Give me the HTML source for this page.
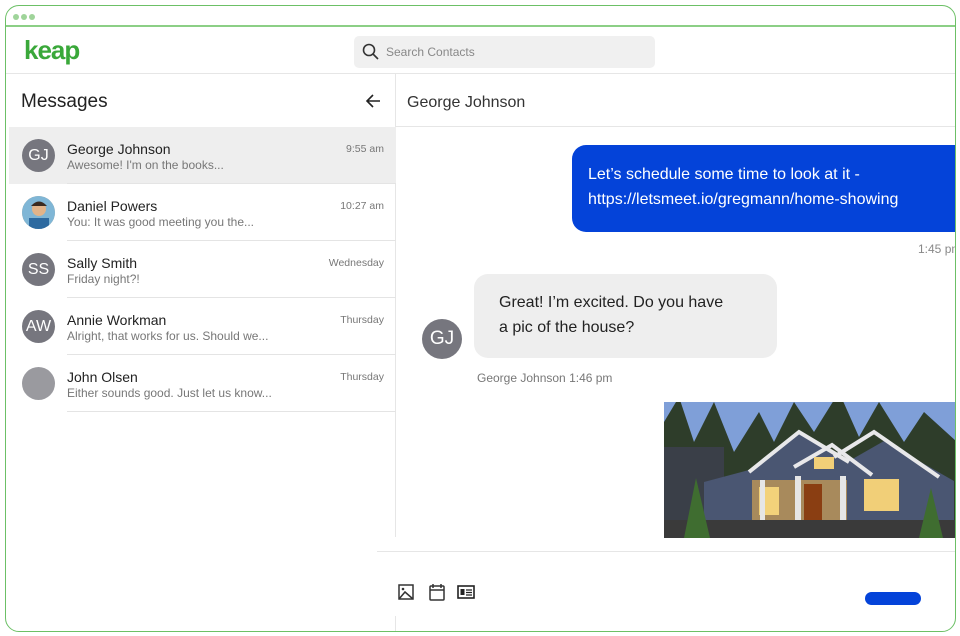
<!DOCTYPE html>
<html><head><meta charset="utf-8"><style>
*{box-sizing:border-box;margin:0;padding:0}
body{width:960px;height:636px;background:#fff;font-family:"Liberation Sans",sans-serif;position:relative;overflow:hidden;color:#222}
.frame{position:absolute;left:5px;top:5px;width:951px;height:627px;border:1.5px solid #6cc066;border-radius:14px;overflow:hidden}
.abs{position:absolute;white-space:nowrap}
.dot{position:absolute;top:8px;width:6px;height:6px;border-radius:50%;background:#9fd49a}
.row{position:absolute;left:3px;width:387px;height:57px}
.av{position:absolute;left:13px;top:12px;width:33px;height:33px;border-radius:50%;overflow:hidden;background:#76767e;color:#fff;font-size:16px;text-align:center;line-height:33px}
.nm{position:absolute;left:58px;top:14px;font-size:14px;color:#222}
.pv{position:absolute;left:58px;top:31px;font-size:12px;color:#777}
.tm{position:absolute;right:12px;top:16px;font-size:10.5px;color:#777}
.sep{position:absolute;left:58px;right:0;bottom:0;height:1px;background:#e4e4e4}
</style></head><body>
<div class="frame">
 <div class="dot" style="left:7px"></div><div class="dot" style="left:15px"></div><div class="dot" style="left:23px"></div>
 <div class="abs" style="left:0;right:0;top:19px;height:1.5px;background:#8ccf86"></div>
 <div class="abs" style="left:18px;top:29px;font-size:26px;font-weight:bold;color:#3aa83a;letter-spacing:-1px">keap</div>
 <div class="abs" style="left:348px;top:30px;width:301px;height:32px;background:#f0f0f0;border-radius:5px">
  <svg class="abs" style="left:8px;top:7px" width="18" height="18" viewBox="0 0 18 18"><circle cx="7" cy="7" r="5.5" fill="none" stroke="#333" stroke-width="1.6"/><path d="M11 11l5 5" stroke="#333" stroke-width="1.6"/></svg>
  <div class="abs" style="left:32px;top:9px;font-size:12px;color:#888">Search Contacts</div>
 </div>
 <div class="abs" style="left:0;right:0;top:67px;height:1px;background:#e6e6e6"></div>
 <div class="abs" style="left:389px;top:68px;height:463px;width:1px;background:#e6e6e6"></div>
 <div class="abs" style="left:389px;top:610px;bottom:0;width:1px;background:#e6e6e6"></div>
 <div class="abs" style="left:15px;top:85px;font-size:19px;color:#222">Messages</div>
 <svg class="abs" style="left:359px;top:87px" width="16" height="16" viewBox="0 0 16 16"><path d="M15 8H2M8 2L2 8l6 6" fill="none" stroke="#222" stroke-width="1.6"/></svg>
 <div class="abs" style="left:390px;right:0;top:120px;height:1px;background:#e6e6e6"></div>
 <div class="abs" style="left:401px;top:88px;font-size:16px;color:#333">George Johnson</div>

 <div class="row" style="top:121px;background:#eeeeee"><div class="av">GJ</div><div class="nm">George Johnson</div><div class="pv">Awesome! I'm on the books...</div><div class="tm">9:55 am</div></div>
 <div class="row" style="top:178px"><div class="av" style="background:#c9a27a"><svg width="33" height="33"><rect width="33" height="33" fill="#7fb6d6"/><circle cx="17" cy="13" r="7" fill="#e2b48a"/><path d="M9 10q8-9 16 0" fill="#3a2a20"/><rect x="7" y="22" width="20" height="12" fill="#2d6aa0"/></svg></div><div class="nm">Daniel Powers</div><div class="pv">You: It was good meeting you the...</div><div class="tm">10:27 am</div><div class="sep"></div></div>
 <div class="row" style="top:235px"><div class="av">SS</div><div class="nm">Sally Smith</div><div class="pv">Friday night?!</div><div class="tm">Wednesday</div><div class="sep"></div></div>
 <div class="row" style="top:292px"><div class="av">AW</div><div class="nm">Annie Workman</div><div class="pv">Alright, that works for us. Should we...</div><div class="tm">Thursday</div><div class="sep"></div></div>
 <div class="row" style="top:349px"><div class="av" style="background:#9a9a9f"></div><div class="nm">John Olsen</div><div class="pv">Either sounds good. Just let us know...</div><div class="tm">Thursday</div><div class="sep"></div></div>
 <div class="abs" style="left:61px;width:329px;top:177px;height:1px;background:#e4e4e4"></div>

 <div class="abs" style="left:566px;top:139px;width:400px;height:87px;background:#0443d9;border-radius:14px;color:#fff;font-size:16px;line-height:25px;padding:17px 0 0 16px">Let’s schedule some time to look at it -<br>https://letsmeet.io/gregmann/home-showing</div>
 <div class="abs" style="left:912px;top:236px;font-size:12px;color:#888">1:45 pm</div>
 <div class="abs" style="left:468px;top:268px;width:303px;height:84px;background:#eeeeee;border-radius:14px;font-size:16px;line-height:25px;padding:16px 0 0 25px;color:#222">Great! I’m excited. Do you have<br>a pic of the house?</div>
 <div class="abs" style="left:416px;top:313px;width:40px;height:40px;border-radius:50%;background:#76767e;color:#fff;font-size:19px;text-align:center;line-height:40px">GJ</div>
 <div class="abs" style="left:471px;top:365px;font-size:12px;color:#777">George Johnson 1:46 pm</div>

 <svg class="abs" style="left:658px;top:396px" width="293" height="136" viewBox="0 0 293 136">
  <rect width="293" height="136" fill="#7f9fd8"/>
  <path d="M0 136V20l15-25 15 45 20-40 20 50 25-40 15 30 20-40 20 30 25-40 20 45 20-35 25 40 20-30 33 30V136z" fill="#2e3d2a"/>
  <rect x="0" y="45" width="60" height="91" fill="#3a3f48"/>
  <path d="M40 80l45-12 20-15 30-22 50 28 35-20 70 40v57H40z" fill="#4a5672"/>
  <path d="M85 70l50-40 50 30M170 55l40-25 65 45" fill="none" stroke="#e8e8ea" stroke-width="4"/>
  <path d="M130 65l38-22 40 30" fill="none" stroke="#e8e8ea" stroke-width="4"/>
  <rect x="88" y="78" width="95" height="46" fill="#a88a5c"/>
  <rect x="95" y="85" width="20" height="28" fill="#f3d27a"/>
  <rect x="140" y="82" width="18" height="40" fill="#8a3e12"/>
  <rect x="200" y="77" width="35" height="32" fill="#f1cf78"/>
  <rect x="150" y="55" width="20" height="12" fill="#f1cf78"/>
  <rect x="96" y="78" width="5" height="45" fill="#e6e6e6"/><rect x="131" y="74" width="6" height="49" fill="#e6e6e6"/><rect x="176" y="74" width="6" height="49" fill="#e6e6e6"/>
  <rect x="0" y="118" width="293" height="18" fill="#3a3a3a"/>
  <path d="M20 136l12-60 14 60zM255 136l12-50 12 50z" fill="#3f6d30"/>
 </svg>

 <div class="abs" style="left:371px;right:0;top:545px;height:1px;background:#e6e6e6"></div>
 <svg class="abs" style="left:392px;top:578px" width="16" height="16" viewBox="0 0 16 16"><rect x="1" y="1" width="14" height="14" fill="none" stroke="#333" stroke-width="1.5"/><path d="M1 15l6-7 8 7" fill="none" stroke="#333" stroke-width="1.5"/><circle cx="5" cy="5" r="1.3" fill="#333"/></svg>
 <svg class="abs" style="left:423px;top:577px" width="16" height="18" viewBox="0 0 16 18"><rect x="1" y="3" width="14" height="14" rx="1" fill="none" stroke="#333" stroke-width="1.5"/><path d="M1 7h14M4 1v4M12 1v4" stroke="#333" stroke-width="1.5"/></svg>
 <svg class="abs" style="left:451px;top:579px" width="18" height="14" viewBox="0 0 18 14"><rect x="1" y="1" width="16" height="12" fill="none" stroke="#222" stroke-width="1.6"/><rect x="3.5" y="4" width="4" height="6" fill="#222"/><path d="M9 5h6M9 7.5h6M9 10h6" stroke="#222" stroke-width="1.3"/></svg>
 <div class="abs" style="left:859px;top:586px;width:56px;height:13px;border-radius:7px;background:#0443d9"></div>
</div>
</body></html>
